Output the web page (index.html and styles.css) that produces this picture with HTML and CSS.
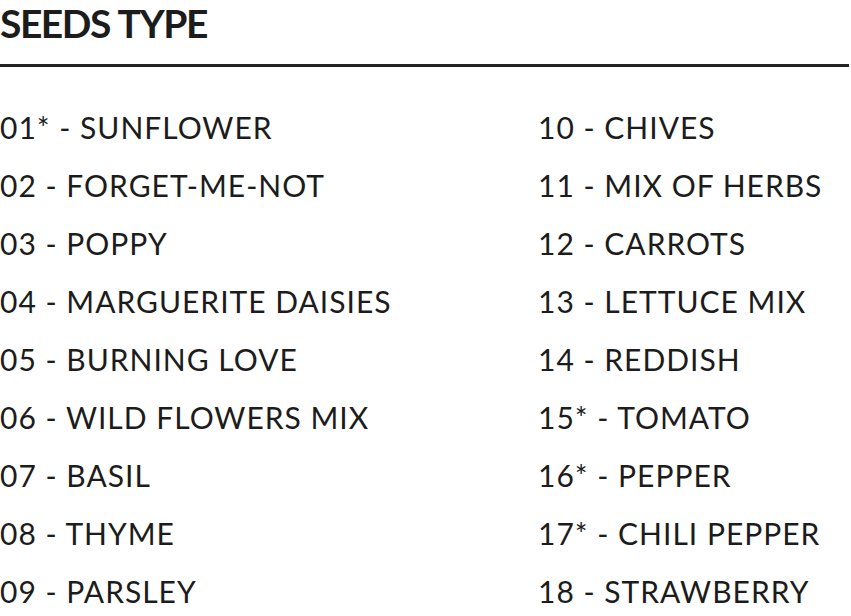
FILE: index.html
```html
<!DOCTYPE html>
<html>
<head>
<meta charset="utf-8">
<link rel="stylesheet" href="styles.css">
</head>
<body>
<div class="page">
  <h1 class="title">SEEDS TYPE</h1>
  <hr class="rule">
  <div class="cols">
    <ul class="list">
      <li>01* - SUNFLOWER</li>
      <li>02 - FORGET-ME-NOT</li>
      <li>03 - POPPY</li>
      <li>04 - MARGUERITE DAISIES</li>
      <li>05 - BURNING LOVE</li>
      <li>06 - WILD FLOWERS MIX</li>
      <li>07 - BASIL</li>
      <li>08 - THYME</li>
      <li>09 - PARSLEY</li>
    </ul>
    <ul class="list">
      <li>10 - CHIVES</li>
      <li>11 - MIX OF HERBS</li>
      <li>12 - CARROTS</li>
      <li>13 - LETTUCE MIX</li>
      <li>14 - REDDISH</li>
      <li>15* - TOMATO</li>
      <li>16* - PEPPER</li>
      <li>17* - CHILI PEPPER</li>
      <li>18 - STRAWBERRY</li>
    </ul>
  </div>
</div>
</body>
</html>
```
FILE: styles.css
```css
html, body {
  margin: 0;
  padding: 0;
  background: #ffffff;
}
.page {
  width: 851px;
  height: 616px;
  overflow: hidden;
  color: #1c1c1c;
  font-family: "Lato", "Liberation Sans", sans-serif;
}
.title {
  margin: 0;
  font-size: 39px;
  line-height: 47px;
  font-weight: 700;
  letter-spacing: -1.5px;
  word-spacing: 1px;
}
.rule {
  margin: 17px 0 0 0;
  width: 849px;
  border: 0;
  height: 3px;
  background: #222222;
}
.cols {
  display: grid;
  grid-template-columns: 538px 1fr;
  padding-top: 31px;
}
.list {
  list-style: none;
  margin: 0;
  padding: 0;
}
.list li {
  font-size: 30px;
  line-height: 58px;
  letter-spacing: 1px;
  white-space: nowrap;
}
```
